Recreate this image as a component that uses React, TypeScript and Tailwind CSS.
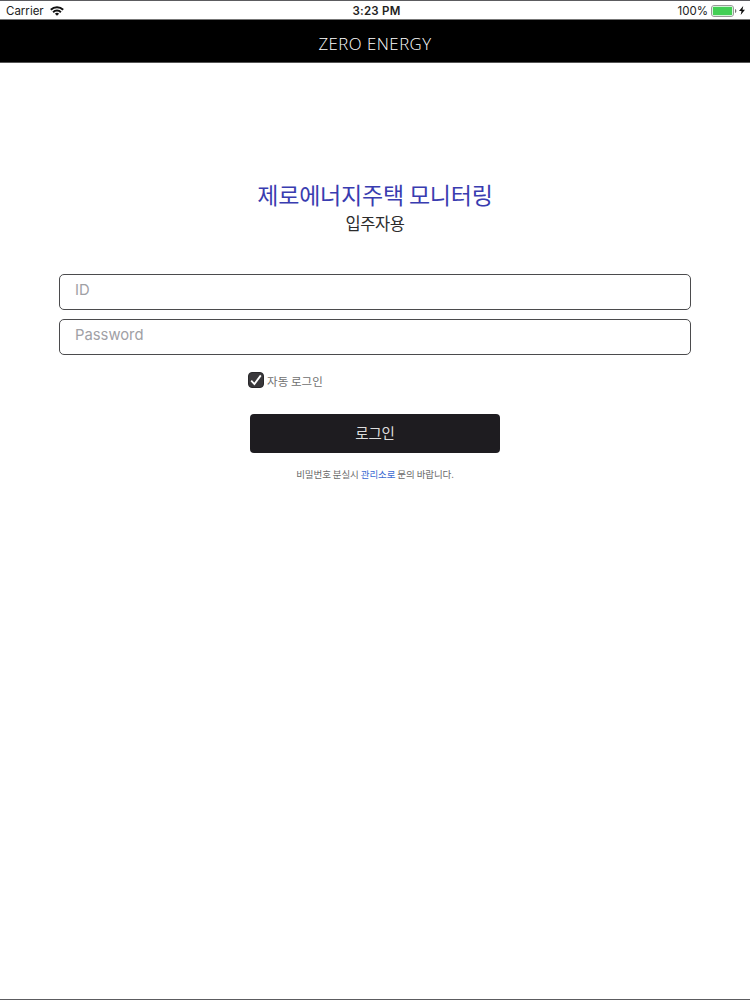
import { useState } from 'react';

export default function App() {
  const [autoLogin, setAutoLogin] = useState(true);

  return (
    <div className="flex h-[1000px] w-[750px] flex-col border-y border-[#5c5c60] bg-white font-['Noto_Sans_CJK_KR',sans-serif]">
      <StatusBar />

      <header className="flex h-[43px] items-center justify-center border-b border-[#555] bg-black pt-[7px]">
        <h1 className="font-['Open_Sans',sans-serif] text-[16.8px] leading-none font-light tracking-[0.5px] text-white">
          ZERO ENERGY
        </h1>
      </header>

      <main className="flex flex-col items-center">
        <h2 className="mt-[114px] text-[23px] leading-[34px] tracking-[-0.2px] whitespace-nowrap text-[#393cb0]">
          제로에너지주택 모니터링
        </h2>
        <p className="mt-[1px] text-[16.5px] leading-[22px] tracking-[-0.4px] text-[#2c2c2c]">입주자용</p>

        <form className="mt-[40px] flex w-[632px] flex-col items-center" onSubmit={e => e.preventDefault()}>
          <Field type="text" placeholder="ID" />
          <Field type="password" placeholder="Password" />

          {/* Auto login */}
          <label className="mt-[7px] ml-[3px] flex h-[18px] w-[257px] items-center gap-[3px]">
            <input
              type="checkbox"
              className="sr-only"
              checked={autoLogin}
              onChange={e => setAutoLogin(e.target.checked)}
            />
            <CheckIcon checked={autoLogin} />
            <span className="pt-[2px] text-[11.5px] leading-[18px] tracking-[0.05px] text-[#707070]">자동 로그인</span>
          </label>

          <button
            type="submit"
            className="mt-[25px] h-[39px] w-[250px] rounded-[4px] bg-[#1e1c20] pb-[2px] text-[14.5px] leading-[37px] tracking-[-0.2px] text-[#ddd]"
          >
            로그인
          </button>
        </form>

        <p className="mt-[13px] text-[9.5px] leading-[16px] tracking-[-0.1px] whitespace-nowrap text-[#6a6a6a]">
          비밀번호 분실시 <a className="text-[#3b6bd2]">관리소로</a> 문의 바랍니다.
        </p>
      </main>
    </div>
  );
}

function StatusBar() {
  return (
    <div className="grid h-[19px] grid-cols-3 items-center border-b border-[#777] pt-[1px] pr-[5px] pl-[6px] font-['Inter',sans-serif] text-[11.5px] leading-none text-[#222]">
      <div className="flex items-center gap-[6px]">
        <span className="pt-[2px]">Carrier</span>
        <svg width="14" height="10" viewBox="0 0 14 10" fill="none" stroke="#111" strokeWidth="2">
          <path d="M.8 3.7a8.8 8.8 0 0 1 12.4 0" />
          <path d="M3.1 6.2a5.5 5.5 0 0 1 7.8 0" />
          <path d="M7 9.8 4.9 7.7a3 3 0 0 1 4.2 0z" fill="#111" stroke="none" />
        </svg>
      </div>
      <span className="pt-[2px] pl-[2px] text-center font-semibold tracking-[0.25px]">3:23 PM</span>
      <div className="flex items-center justify-end">
        <span className="pt-[2px]">100%</span>
        <svg className="ml-[3px]" width="26" height="12" viewBox="0 0 26 12">
          <rect x=".5" y=".5" width="22" height="11" rx="2.5" fill="none" stroke="#999" />
          <rect x="1.8" y="1.8" width="19.4" height="8.4" rx="1" fill="#43cf55" />
          <path d="M24 4v4c.9-.3 1.3-1 1.3-2S24.900 4.300 24 4z" fill="#777" />
        </svg>
        <svg className="ml-[2px]" width="6" height="9" viewBox="0 0 6 9">
          <path d="M4.200 0 0 5h2.500L1.700 9 6 3.800H3.500z" fill="#111" />
        </svg>
      </div>
    </div>
  );
}

function Field({ type, placeholder }: { type: string; placeholder: string }) {
  return (
    <input
      type={type}
      placeholder={placeholder}
      className="mb-[9px] h-[36px] w-full rounded-[5px] border-[1.5px] border-[#4b4b4d] bg-white px-[15px] pb-[5px] font-['Inter',sans-serif] text-[14.8px] font-normal text-[#222] outline-none placeholder:text-[#a0a0a5]"
    />
  );
}

function CheckIcon({ checked }: { checked: boolean }) {
  return (
    <svg width="16" height="16" viewBox="0 0 16 16">
      <rect x=".5" y=".5" width="15" height="15" rx="3.500" fill="#39383b" stroke="#29282b" />
      {checked && <path d="m3.200 8.600 3.200 3.400 6.400-8.600" fill="none" stroke="#fff" strokeWidth="1.800" />}
    </svg>
  );
}
